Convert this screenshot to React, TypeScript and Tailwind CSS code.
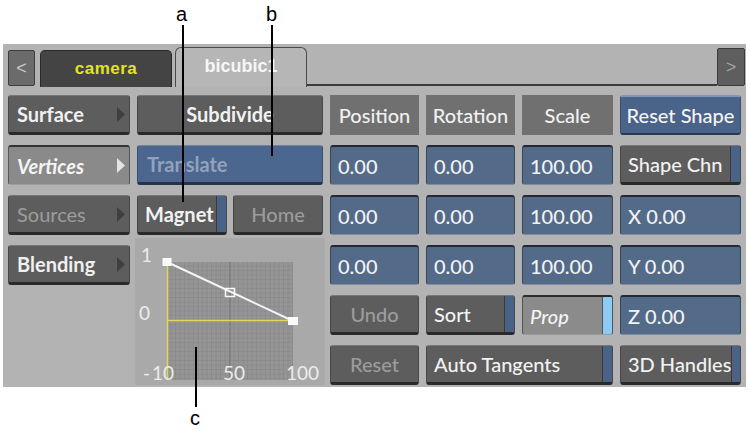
import React from "react";

const font = { fontFamily: "Lato, 'Noto Sans', sans-serif" };

function Arrow({ light }: { light?: boolean }) {
  return (
    <svg width="9" height="15" viewBox="0 0 9 15" className="shrink-0">
      <path d="M1 0 L9 7.5 L1 15 Z" fill={light ? "#e4e4e4" : "#3f3f3f"} />
    </svg>
  );
}

function NavBtn({ label, state }: { label: string; state: "on" | "off" | "dim" }) {
  const pressed = state === "on";
  return (
    <div
      className={[
        "flex items-center justify-between rounded-[3px] pl-[8px] pr-[4px] text-[20px]",
        pressed
          ? "border-t-2 border-b border-x border-t-[#333] border-b-[#9c9c9c] border-x-[#555] bg-[#8a8a8a] font-bold italic text-[#f4f4f4]"
          : "border-t border-b-[3px] border-x border-t-[#767676] border-b-[#2a2a2a] border-x-[#474747] bg-[#5d5d5d]",
        state === "dim" ? "text-[#9d9d9d]" : !pressed ? "font-bold text-[#f0f0f0]" : "",
      ].join(" ")}
    >
      <span>{label}</span>
      <Arrow light={pressed} />
    </div>
  );
}

function Btn({
  label,
  center,
  dim,
  bold,
  strip,
  className = "",
}: {
  label: string;
  center?: boolean;
  dim?: boolean;
  bold?: boolean;
  strip?: boolean;
  className?: string;
}) {
  return (
    <div
      className={[
        "flex items-stretch overflow-hidden rounded-[3px] border-t border-b-[3px] border-x border-t-[#777] border-b-[#2a2a2a] border-x-[#474747] bg-[#5d5d5d] text-[20px]",
        dim ? "text-[#9c9c9c]" : "text-[#f2f2f2]",
        bold ? "font-bold" : "font-medium",
        className,
      ].join(" ")}
    >
      <span className={["flex flex-1 items-center whitespace-nowrap", center ? "justify-center" : "pl-[7px]"].join(" ")}>
        {label}
      </span>
      {strip && <span className="w-[10px] border-l border-l-[#3a3a3a] bg-[#4a6188]" />}
    </div>
  );
}

function Header({ label }: { label: string }) {
  return (
    <div className="flex items-center justify-center bg-[#707070] text-[20px] font-medium text-[#f0f0f0]">{label}</div>
  );
}

function Field({ value }: { value: string }) {
  return (
    <div className="flex items-center rounded-[3px] border-t-2 border-x border-b border-t-[#232a36] border-x-[#3a475b] border-b-[#7d8ba0] bg-[#536a89] pl-[7px] text-[20px] font-medium text-[#f2f2f2]">
      {value}
    </div>
  );
}

function Graph() {
  return (
    <div className="col-start-2 row-span-3 row-start-4 -mx-[2px] -mt-[7px] bg-[#a9a9a9]">
      <svg width="190" height="147" viewBox="0 0 190 147" style={font}>
        <defs>
          <pattern id="minor" width="4.5" height="4.5" patternUnits="userSpaceOnUse" x="32" y="24">
            <path d="M4.5 0 V4.5 H0" fill="none" stroke="#848484" strokeWidth="1" />
          </pattern>
        </defs>
        <rect x="32" y="24" width="126" height="118" fill="#959595" />
        <rect x="32" y="24" width="126" height="118" fill="url(#minor)" />
        <line x1="95" y1="24" x2="95" y2="142" stroke="#747474" strokeWidth="1" />
        <line x1="32" y1="89" x2="158" y2="89" stroke="#8c8aa6" strokeWidth="1" />
        <line x1="32.5" y1="24" x2="32.5" y2="142" stroke="#e2d454" strokeWidth="1.5" />
        <line x1="32" y1="82.5" x2="158" y2="82.5" stroke="#e2d454" strokeWidth="1.5" />
        <line x1="32" y1="24" x2="158" y2="83" stroke="#f4f4f4" strokeWidth="2" />
        <rect x="27.5" y="20" width="9" height="8" fill="#fafafa" />
        <rect x="153" y="79" width="10" height="8" fill="#fafafa" />
        <rect x="90.5" y="50.5" width="9" height="8" fill="none" stroke="#fafafa" strokeWidth="1.5" />
        <g fill="#ececec" fontSize="19">
          <text x="6" y="24">1</text>
          <text x="4" y="82">0</text>
          <text x="8" y="142">
            -<tspan dx="2">10</tspan>
          </text>
          <text x="88" y="142">50</text>
          <text x="151" y="142">100</text>
        </g>
      </svg>
    </div>
  );
}

function TabRow() {
  return (
    <div className="flex h-[43px] items-end">
      <div className="mb-[1px] ml-[5px] flex h-[36px] w-[27px] items-center justify-center rounded-[2px] border border-[#3d3d3d] bg-[#6b6b6b] text-[18px] text-[#c9c9c9]" style={{ fontFamily: "'Liberation Sans', sans-serif" }}>
        &lt;
      </div>
      <div
        className="ml-[5px] flex h-[37px] w-[132px] items-center justify-center rounded-t-[5px] border border-b-0 border-[#2a2a2a] bg-[#444444] text-[17px] font-bold tracking-[0.5px] text-[#e4e41e]"
        style={{ fontFamily: "'Liberation Sans', sans-serif" }}
      >
        camera
      </div>
      <div
        className="ml-[3px] flex h-[40px] w-[132px] items-center justify-center rounded-t-[6px] border border-b-0 border-[#4a4a4a] bg-[#b6b6b6] pb-[2px] text-[18px] font-bold text-[#f6f6f6]"
        style={{ fontFamily: "'Liberation Sans', sans-serif" }}
      >
        bicubic1
      </div>
      <div className="mb-[1px] h-full flex-1 border-b-2 border-b-[#3c3c3c]" />
      <div className="mb-[1px] mr-[1px] flex h-[38px] w-[28px] items-center justify-center rounded-[2px] border border-[#3a3a3a] bg-[#5e5e5e] text-[18px] text-[#a3a3a3]" style={{ fontFamily: "'Liberation Sans', sans-serif" }}>
        &gt;
      </div>
    </div>
  );
}

export default function App() {
  return (
    <div className="relative h-[432px] w-[750px] overflow-hidden bg-white" style={font}>
      <div className="ml-[3px] mt-[44px] h-[343px] w-[743px] bg-[#b3b3b3]">
        <TabRow />
        <div className="grid grid-cols-[122px_186px_89px_89px_91px_121px] grid-rows-[repeat(6,40px)] gap-x-[7px] gap-y-[10px] pl-[5px] pt-[8px]">
          {/* row 1 */}
          <NavBtn label="Surface" state="off" />
          <Btn label="Subdivide" center bold />
          <Header label="Position" />
          <Header label="Rotation" />
          <Header label="Scale" />
          <div className="flex items-center justify-center rounded-[3px] border-t-2 border-b-2 border-x border-t-[#8396b6] border-b-[#2b374e] border-x-[#3d4e6a] bg-[#4a6389] text-[20px] font-medium text-[#f4f4f4]">
            Reset Shape
          </div>

          {/* row 2 */}
          <NavBtn label="Vertices" state="on" />
          <div className="flex items-center rounded-[3px] border-t border-b-[3px] border-x border-t-[#6d83a6] border-b-[#26324a] border-x-[#3b4d6c] bg-[#4b668f] pl-[9px] text-[20px] font-bold text-[#93a2ba]">
            Translate
          </div>
          <Field value="0.00" />
          <Field value="0.00" />
          <Field value="100.00" />
          <Btn label="Shape Chn" strip />

          {/* row 3 */}
          <NavBtn label="Sources" state="dim" />
          <div className="flex gap-[6px]">
            <Btn label="Magnet" bold strip className="w-[90px]" />
            <Btn label="Home" center dim className="w-[90px]" />
          </div>
          <Field value="0.00" />
          <Field value="0.00" />
          <Field value="100.00" />
          <Field value="X 0.00" />

          {/* row 4 */}
          <NavBtn label="Blending" state="off" />
          <Graph />
          <Field value="0.00" />
          <Field value="0.00" />
          <Field value="100.00" />
          <Field value="Y 0.00" />

          {/* row 5 */}
          <Btn label="Undo" center dim className="col-start-3" />
          <Btn label="Sort" strip />
          <div className="flex items-stretch overflow-hidden rounded-[3px] border-t-2 border-x border-b border-t-[#2c2c2c] border-x-[#555] border-b-[#9a9a9a] bg-[#8b8b8b] text-[20px] font-medium italic text-[#f4f4f4]">
            <span className="flex flex-1 items-center pl-[7px]">Prop</span>
            <span className="w-[10px] border-l border-l-[#555] bg-[#8dcbf6]" />
          </div>
          <Field value="Z 0.00" />

          {/* row 6 */}
          <Btn label="Reset" center dim className="col-start-3" />
          <Btn label="Auto Tangents" strip className="col-span-2" />
          <Btn label="3D Handles" strip />
        </div>
      </div>

      {/* callouts */}
      <div className="absolute left-[176px] top-[-1px] text-[20px] text-black" style={{ fontFamily: "'Liberation Sans', sans-serif" }}>a</div>
      <div className="absolute left-[182px] top-[25px] h-[177px] w-[2px] bg-black" />
      <div className="absolute left-[266px] top-[-1px] text-[20px] text-black" style={{ fontFamily: "'Liberation Sans', sans-serif" }}>b</div>
      <div className="absolute left-[271px] top-[25px] h-[131px] w-[2px] bg-black" />
      <div className="absolute left-[195px] top-[347px] h-[60px] w-[2px] bg-black" />
      <div className="absolute left-[190px] top-[403px] text-[20px] text-black" style={{ fontFamily: "'Liberation Sans', sans-serif" }}>c</div>
    </div>
  );
}
